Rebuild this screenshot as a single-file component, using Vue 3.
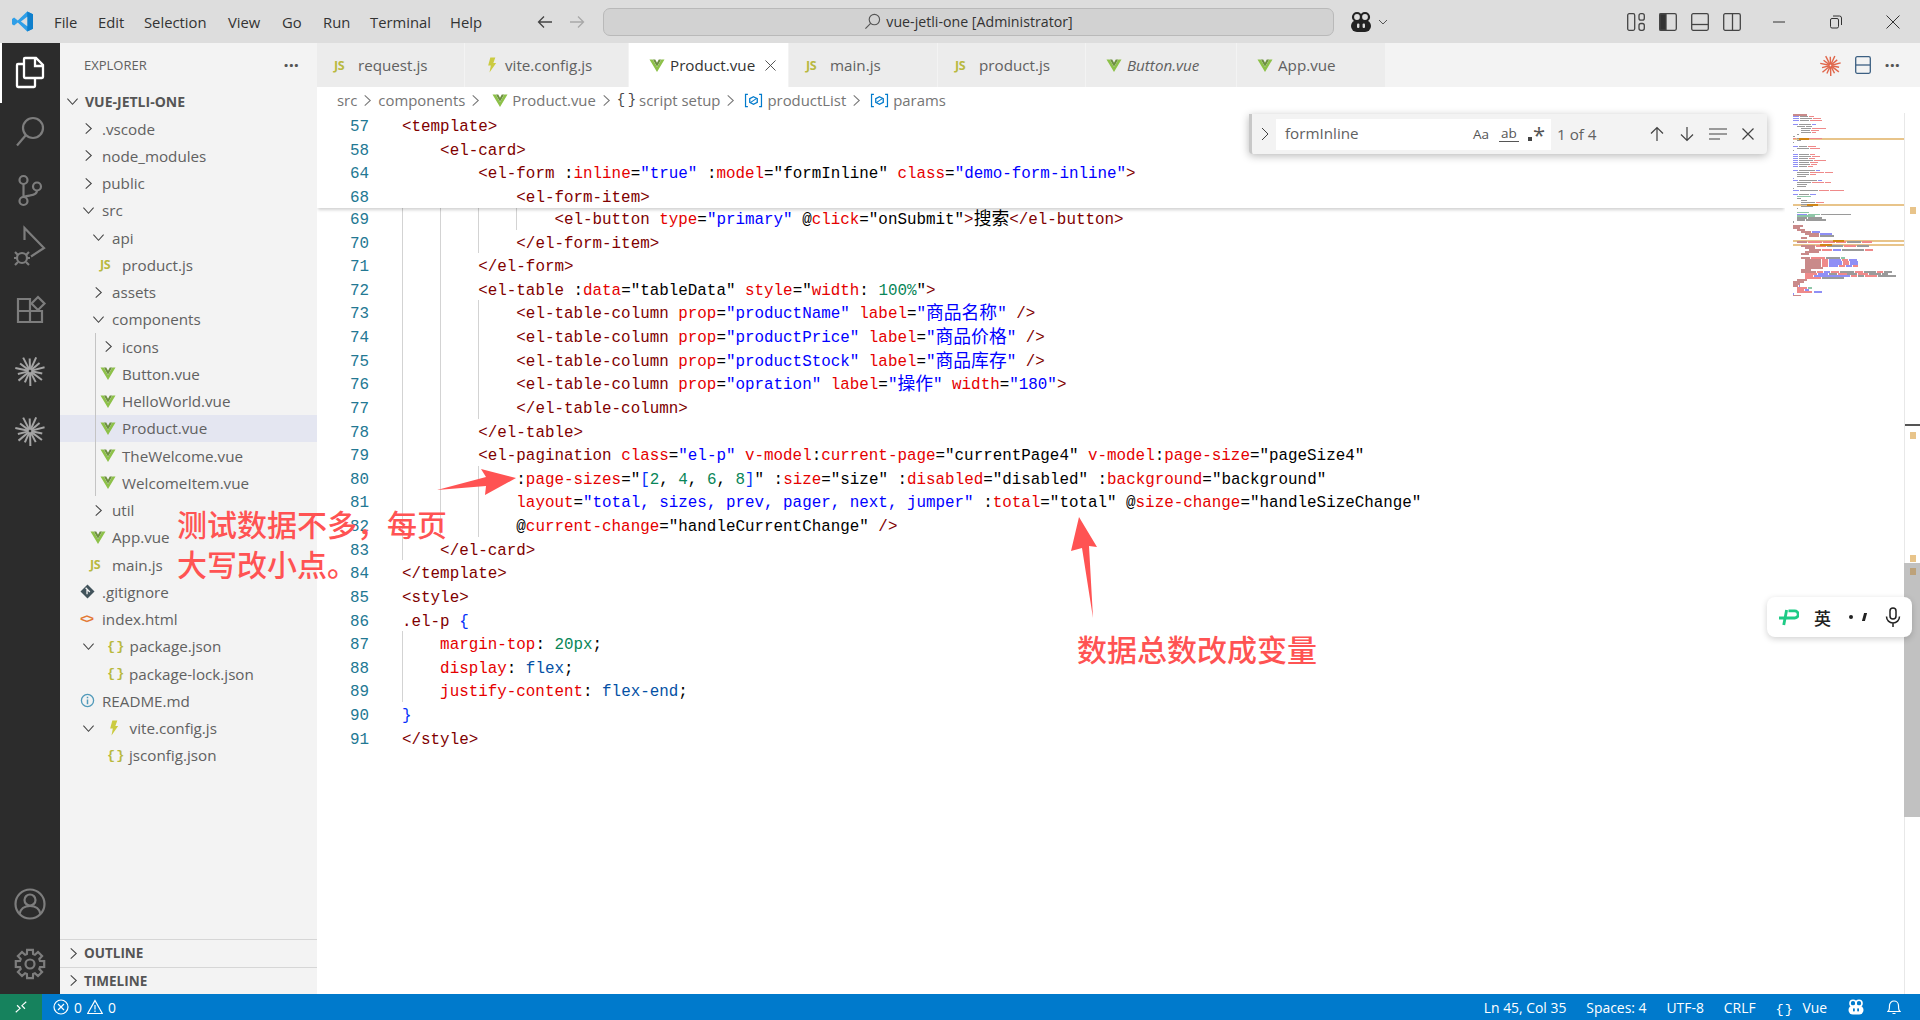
<script setup>
const menus = [
    { label: "File", width: 44 },
    { label: "Edit", width: 46 },
    { label: "Selection", width: 84 },
    { label: "View", width: 54 },
    { label: "Go", width: 41 },
    { label: "Run", width: 47 },
    { label: "Terminal", width: 80 },
    { label: "Help", width: 34 },
];

const tabs = [
    { name: "request.js", icon: "js", width: 148 },
    { name: "vite.config.js", icon: "vite", width: 164 },
    { name: "Product.vue", icon: "vue", width: 160, active: true },
    { name: "main.js", icon: "js", width: 149 },
    { name: "product.js", icon: "js", width: 148 },
    { name: "Button.vue", icon: "vue", width: 151, italic: true },
    { name: "App.vue", icon: "vue", width: 149 },
];

// left = where the chevron/icon slot begins, label follows the slots
const tree = [
    { name: ".vscode", left: 82, chev: "r" },
    { name: "node_modules", left: 82, chev: "r" },
    { name: "public", left: 82, chev: "r" },
    { name: "src", left: 82, chev: "d" },
    { name: "api", left: 92, chev: "d" },
    { name: "product.js", left: 100, icon: "js" },
    { name: "assets", left: 92, chev: "r" },
    { name: "components", left: 92, chev: "d" },
    { name: "icons", left: 102, chev: "r" },
    { name: "Button.vue", left: 100, icon: "vue" },
    { name: "HelloWorld.vue", left: 100, icon: "vue" },
    { name: "Product.vue", left: 100, icon: "vue", selected: true },
    { name: "TheWelcome.vue", left: 100, icon: "vue" },
    { name: "WelcomeItem.vue", left: 100, icon: "vue" },
    { name: "util", left: 92, chev: "r" },
    { name: "App.vue", left: 90, icon: "vue" },
    { name: "main.js", left: 90, icon: "js" },
    { name: ".gitignore", left: 80, icon: "git" },
    { name: "index.html", left: 80, icon: "html" },
    { name: "package.json", left: 82, chev: "d", icon: "json" },
    { name: "package-lock.json", left: 107, icon: "json" },
    { name: "README.md", left: 80, icon: "info" },
    { name: "vite.config.js", left: 82, chev: "d", icon: "vite" },
    { name: "jsconfig.json", left: 107, icon: "json" },
];

// §x switches colour: t tag, a attribute, s string, k plain, n number, b bracket, v css value
const parse = (src) =>
    src
        .split("§")
        .filter(Boolean)
        .flatMap((part) =>
            part
                .slice(1)
                .split(/([\u4e00-\u9fff]+)/)
                .filter(Boolean)
                .map((text) => ({
                    cls: part[0],
                    text,
                    cjk: /[\u4e00-\u9fff]/.test(text),
                })),
        );

const line = (num, depth, src) => ({ num, depth, tokens: parse(src) });

const stickyLines = [
    line(57, 0, "§t<template>"),
    line(58, 1, "§t<el-card>"),
    line(64, 2, '§t<el-form §k:§ainline§k=§s"true"§k :§amodel§k="formInline" §aclass§k=§s"demo-form-inline"§t>'),
    line(68, 3, "§t<el-form-item>"),
];

const codeLines = [
    line(69, 4, '§t<el-button §atype§k=§s"primary" §k@§aclick§k="onSubmit"§t>§k搜索§t</el-button>'),
    line(70, 3, "§t</el-form-item>"),
    line(71, 2, "§t</el-form>"),
    line(72, 2, '§t<el-table §k:§adata§k="tableData" §astyle§k="§awidth§k: §n100%§k"§t>'),
    line(73, 3, '§t<el-table-column §aprop§k=§s"productName" §alabel§k=§s"商品名称" §t/>'),
    line(74, 3, '§t<el-table-column §aprop§k=§s"productPrice" §alabel§k=§s"商品价格" §t/>'),
    line(75, 3, '§t<el-table-column §aprop§k=§s"productStock" §alabel§k=§s"商品库存" §t/>'),
    line(76, 3, '§t<el-table-column §aprop§k=§s"opration" §alabel§k=§s"操作" §awidth§k=§s"180"§t>'),
    line(77, 3, "§t</el-table-column>"),
    line(78, 2, "§t</el-table>"),
    line(79, 2, '§t<el-pagination §aclass§k=§s"el-p" §av-model§k:§acurrent-page§k="currentPage4" §av-model§k:§apage-size§k="pageSize4"'),
    line(80, 3, '§k:§apage-sizes§k="§b[§n2§k, §n4§k, §n6§k, §n8§b]§k" :§asize§k="size" :§adisabled§k="disabled" :§abackground§k="background"'),
    line(81, 3, '§alayout§k=§s"total, sizes, prev, pager, next, jumper" §k:§atotal§k="total" @§asize-change§k="handleSizeChange"'),
    line(82, 3, '§k@§acurrent-change§k="handleCurrentChange" §t/>'),
    line(83, 1, "§t</el-card>"),
    line(84, 0, "§t</template>"),
    line(85, 0, "§t<style>"),
    line(86, 0, "§t.el-p §b{"),
    line(87, 1, "§amargin-top§k: §n20px§k;"),
    line(88, 1, "§adisplay§k: §vflex§k;"),
    line(89, 1, "§ajustify-content§k: §vflex-end§k;"),
    line(90, 0, "§b}"),
    line(91, 0, "§t</style>"),
];

const burst = Array.from({ length: 14 }, (_, i) => {
    const a = (i * Math.PI) / 7 + 0.2;
    const r = i % 2 ? 15 : 12.5;
    return {
        x1: 30 + Math.cos(a) * 1.5,
        y1: 30 + Math.sin(a) * 1.5,
        x2: 30 + Math.cos(a) * r,
        y2: 30 + Math.sin(a) * r,
    };
});

const gearPath = (() => {
    const pts = [];
    for (let i = 0; i < 8; i++) {
        const a = (i * Math.PI) / 4;
        [[-0.3, 10.5], [-0.2, 14.5], [0.2, 14.5], [0.3, 10.5]].forEach(([d, r]) => {
            pts.push(`${(30 + Math.cos(a + d) * r).toFixed(1)} ${(30 + Math.sin(a + d) * r).toFixed(1)}`);
        });
    }
    return "M" + pts.join("L") + "Z";
})();

const minimapSpec = [
    "0t14", "0b6 7k8 16r5", "0b6 7k12 20r8", "0b6 7k9 17r12", "",
    "0b5 6k12 19b4", "4k8 13k6", "8k10 19r14", "8k9 18r8", "8k10 19r4", "4k2", "0k2",
    "0r3 4k10 15r14", "4k4", "0k1", "", "0b5 6k8 15r8", "4k12 17r10", "0k1", "",
    "0b5 6k10 17r5", "0b5 6k12 19r8", "0b5 6k9 16r6", "0b5 6k14 21r12", "0b5 6k10 17r8", "0b5 6k11 18r6", "0b5 6k8 15r5", "",
    "0b5 6k16 23b4", "4k12 17r14 32r8", "4k12 17r6", "4k9", "0b1", "0b5 6k18 25b4", "4k14 19r12 32r6", "4k10", "4k9", "0k1",
    "0b6 7k18 26r10 37r14", "", "0b5 6k10 17b6", "4g14", "4k4", "8k6", "8k14 23r8",
    "8k16", "8k12", "4k1", "", "4g12", "4b10 15g12 28k30", "4g18", "4k10 15k14", "4k8 13k20", "0k1", "",
    "0t10", "0t7", "4t8", "8t10 19b8", "12t14 27b12", "16t10 27k14", "8t6", "",
    "4t10 15r14 30r12 43r10 54k14 69r10", "", "8t14 23r10 34k16 51r12 64k12", "12t10", "16t12 29r10 40b8 49k22 72r8", "12t14", "8t8", "",
    "8t9 18r14 33k14 48g4", "12t16 29r6 36b12 49r6 56b8", "12t16 29r6 36b13 50r6 57b8", "12t16 29r6 36b13 50r6 57b8", "12t16 29r6 36b9 46r6 53b6 60r5", "12t18", "8t10",
    "8t15 24r6 31b6 38r8 47k14 62r8 71k12 84r6 91k8", "12r12 25b10 36k8 45r10 54k10 65r10 76k12 89k6", "12r8 21b36 58r6 65k6 72r12 85k18", "12r16 29k22", "4t10", "0t11", "0t7",
    "0t5 6b1", "4r10 15g4", "4r7 12b4", "4r15 21b8", "0b1", "0t8",
];

const mmColors = { t: "#c98a8a", r: "#ef8a8a", b: "#8f8ff5", k: "#9a9a9a", g: "#8fc7a8" };

const minimap = minimapSpec.flatMap((spec, i) =>
    spec
        .split(" ")
        .filter(Boolean)
        .map((seg) => {
            const m = seg.match(/(\d+)([a-z])(\d+)/);
            return { x: +m[1], y: i * 1.99, w: +m[3], fill: mmColors[m[2]] };
        }),
);

const mmHits = [
    { y: 24, x: 6, w: 10 },
    { y: 90, x: 14, w: 11 },
    { y: 126, x: 40, w: 11 },
    { y: 130, x: 27, w: 12 },
];
</script>

<template>
    <div class="workbench">
        <svg class="defs" aria-hidden="true">
            <symbol id="vue-logo" viewBox="0 0 16 16">
                <path d="M0 1.5h3.4L8 9.6l4.6-8.1H16L8 15z" fill="#8dc149" />
                <path d="M3.6 1.5h2.5L8 5l1.9-3.5h2.5L8 9.2z" fill="#6c8f3e" />
            </symbol>
            <symbol id="vite-logo" viewBox="0 0 12 20">
                <path d="M4 1h6L7.6 7.5h3.4L3 19l1.6-8.5H1.4z" fill="#cbcb41" />
            </symbol>
            <symbol id="copilot" viewBox="0 0 24 24">
                <circle cx="8" cy="7" r="4" fill="none" stroke="currentColor" stroke-width="2.2" />
                <circle cx="16" cy="7" r="4" fill="none" stroke="currentColor" stroke-width="2.2" />
                <rect x="2" y="10" width="20" height="12" rx="6" fill="currentColor" />
                <rect x="8" y="13.5" width="2.4" height="4.5" rx="1" fill="var(--snout, #fff)" />
                <rect x="13.6" y="13.5" width="2.4" height="4.5" rx="1" fill="var(--snout, #fff)" />
            </symbol>
            <symbol id="ref-icon" viewBox="0 0 20 16">
                <path d="M4 1.5H1.5v13H4M16 1.5h2.5v13H16" fill="none" stroke="#007acc" stroke-width="1.3" />
                <path d="M10 4l4 2v4l-4 2-4-2V6z" fill="none" stroke="#007acc" stroke-width="1.4" />
                <path d="M7 10l6-4" stroke="#007acc" stroke-width="1.2" />
            </symbol>
            <symbol id="chev-right" viewBox="0 0 14 14">
                <path d="M4 1.500l6 5.500-6 5.500" fill="none" stroke="currentColor" stroke-width="1.100" />
            </symbol>
        </svg>

        <header class="titlebar">
            <div class="tb-left">
                <svg class="logo" viewBox="0 0 20 20">
                    <path d="M14.5 0.5 20 3v14l-5.500 2.500L5.500 11l-3.500 2.700L0 12.500v-5L2 6.300 5.500 9z" fill="#2f9fe8" />
                    <path d="M14.500 0.500 20 3v14l-5.500 2.500z" fill="#0f7fcc" />
                    <path d="M14.500 5.500 8.500 10l6 4.500z" fill="#dddddd" />
                </svg>
                <nav class="menu">
                    <span v-for="item in menus" :key="item.label" :style="{ width: item.width + 'px' }">{{ item.label }}</span>
                </nav>
                <svg class="nav-arrow first" viewBox="0 0 16 14">
                    <path d="M15 7H1.500M7 1.500 1.500 7 7 12.500" />
                </svg>
                <svg class="nav-arrow faded" viewBox="0 0 16 14">
                    <path d="M1 7h13.500M9 1.500 14.500 7 9 12.500" />
                </svg>
            </div>

            <div class="command-center">
                <svg viewBox="0 0 18 18">
                    <circle cx="11" cy="7" r="5.500" />
                    <path d="M7 11 1.500 16.500" />
                </svg>
                <span>vue-jetli-one [Administrator]</span>
            </div>

            <svg class="tb-copilot"><use href="#copilot" /></svg>
            <svg class="tb-chevron" viewBox="0 0 10 6"><path d="M1 1l4 4 4-4" /></svg>

            <div class="layout-icons">
                <svg viewBox="0 0 18 18">
                    <rect x="0.700" y="0.700" width="7" height="16.600" rx="1.500" />
                    <rect x="12" y="0.700" width="5.300" height="6.500" rx="2" />
                    <rect x="12" y="10.500" width="5.300" height="6.800" rx="2" />
                </svg>
                <svg viewBox="0 0 18 18">
                    <rect x="0.700" y="0.700" width="16.600" height="16.600" rx="1.500" />
                    <path d="M1 1h6v16H1z" fill="#333" />
                </svg>
                <svg viewBox="0 0 18 18">
                    <rect x="0.700" y="0.700" width="16.600" height="16.600" rx="1.500" />
                    <path d="M1 11.500h16" />
                </svg>
                <svg viewBox="0 0 18 18">
                    <rect x="0.700" y="0.700" width="16.600" height="16.600" rx="1.500" />
                    <path d="M9.500 1v16" />
                </svg>
            </div>

            <div class="window-buttons">
                <svg viewBox="0 0 14 14"><path d="M1 7h12" /></svg>
                <svg viewBox="0 0 14 14">
                    <rect x="1.500" y="3.500" width="8" height="9.500" rx="1.500" />
                    <path d="M4 1h6.500a2 2 0 0 1 2 2v7" />
                </svg>
                <svg viewBox="0 0 14 14"><path d="M0.500 0.500l13 13M13.500 0.500l-13 13" /></svg>
            </div>
        </header>

        <div class="body">
            <aside class="activity">
                <div class="act-item active">
                    <svg viewBox="0 0 60 60">
                        <path d="M25 15h11l7 7v12a1 1 0 0 1-1 1H25a1 1 0 0 1-1-1V16a1 1 0 0 1 1-1zM35 15v8h8" />
                        <path d="M24 21h-6a1 1 0 0 0-1 1v21a1 1 0 0 0 1 1h16a1 1 0 0 0 1-1v-9" />
                    </svg>
                </div>
                <div class="act-item">
                    <svg viewBox="0 0 60 60">
                        <circle cx="33" cy="25" r="10" />
                        <path d="M26 32 17 42.500" />
                    </svg>
                </div>
                <div class="act-item">
                    <svg viewBox="0 0 60 60">
                        <circle cx="23.500" cy="18" r="4" />
                        <circle cx="37" cy="24.500" r="4" />
                        <circle cx="23.500" cy="39" r="4" />
                        <path d="M23.500 22v13M37 28.500c0 4-4 4.500-7 5s-6.500 1-6.500 2" />
                    </svg>
                </div>
                <div class="act-item">
                    <svg viewBox="0 0 60 60">
                        <path d="M24.500 18V6L44 26l-13 8.500" />
                        <circle cx="22" cy="36" r="5" />
                        <path d="M15 30l3 3M29 30l-3 3M14 36h3M27 36h3M15 43l3-3M29 43l-3-3" />
                    </svg>
                </div>
                <div class="act-item">
                    <svg viewBox="0 0 60 60">
                        <path d="M18 18h12v23H18zM18 30h24v11H30V30" />
                        <path d="M38 16l6.500 6.500L38 29l-6.500-6.500z" />
                    </svg>
                </div>
                <div class="act-item snow" v-for="n in 2" :key="n">
                    <svg viewBox="0 0 60 60">
                        <line v-for="(ray, i) in burst" :key="i" v-bind="ray" />
                    </svg>
                </div>
                <div class="act-item push">
                    <svg viewBox="0 0 60 60">
                        <circle cx="30" cy="30" r="14.500" />
                        <circle cx="30" cy="26" r="5.500" />
                        <path d="M19.500 40c1-5 5-8 10.500-8s9.500 3 10.500 8" />
                    </svg>
                </div>
                <div class="act-item">
                    <svg viewBox="0 0 60 60">
                        <path :d="gearPath" />
                        <circle cx="30" cy="30" r="4.500" />
                    </svg>
                </div>
            </aside>

            <aside class="sidebar">
                <div class="side-head">
                    <span>EXPLORER</span>
                    <span class="dots">···</span>
                </div>
                <div class="root-row">
                    <svg class="chev" viewBox="0 0 14 14"><path d="M1.500 4l5.500 6 5.500-6" /></svg>
                    <span>VUE-JETLI-ONE</span>
                </div>
                <div class="tree">
                    <div class="tree-guide"></div>
                    <div
                        v-for="item in tree"
                        :key="item.name + item.left"
                        class="row"
                        :class="{ selected: item.selected }"
                        :style="{ paddingLeft: item.left - 60 + 'px' }"
                    >
                        <span v-if="item.chev" class="slot-chev">
                            <svg v-if="item.chev === 'r'" class="chev" viewBox="0 0 14 14">
                                <path d="M4 1.500l6 5.500-6 5.500" />
                            </svg>
                            <svg v-else class="chev" viewBox="0 0 14 14">
                                <path d="M1.500 4l5.500 6 5.500-6" />
                            </svg>
                        </span>
                        <span v-if="item.icon" class="slot-icon">
                            <span v-if="item.icon === 'js'" class="ic-js">JS</span>
                            <svg v-else-if="item.icon === 'vue'" class="ic-vue"><use href="#vue-logo" /></svg>
                            <svg v-else-if="item.icon === 'vite'" class="ic-vite"><use href="#vite-logo" /></svg>
                            <span v-else-if="item.icon === 'json'" class="ic-json">{ }</span>
                            <span v-else-if="item.icon === 'html'" class="ic-html">&lt;&gt;</span>
                            <svg v-else-if="item.icon === 'git'" class="ic-glyph" viewBox="0 0 16 16">
                                <path d="M8 0.500 15.500 8 8 15.500 0.500 8z" fill="#41535b" />
                                <path d="M6 4l4.500 4.500M7.500 6v5" stroke="#f3f3f3" stroke-width="1.400" />
                            </svg>
                            <svg v-else class="ic-glyph" viewBox="0 0 16 16">
                                <circle cx="8" cy="8" r="6.500" fill="none" stroke="#519aba" stroke-width="1.400" />
                                <path d="M8 7v5M8 4v1.500" stroke="#519aba" stroke-width="1.600" />
                            </svg>
                        </span>
                        <span class="row-name">{{ item.name }}</span>
                    </div>
                </div>
                <div class="panes">
                    <div class="pane">
                        <svg class="chev" viewBox="0 0 14 14"><path d="M4 1.500l6 5.500-6 5.500" /></svg>
                        OUTLINE
                    </div>
                    <div class="pane">
                        <svg class="chev" viewBox="0 0 14 14"><path d="M4 1.500l6 5.500-6 5.500" /></svg>
                        TIMELINE
                    </div>
                </div>
            </aside>

            <main class="editor">
                <div class="tabs">
                    <div
                        v-for="tab in tabs"
                        :key="tab.name"
                        class="tab"
                        :class="{ active: tab.active, italic: tab.italic }"
                        :style="{ width: tab.width + 'px' }"
                    >
                        <span v-if="tab.icon === 'js'" class="ic-js">JS</span>
                        <svg v-else-if="tab.icon === 'vue'" class="ic-vue"><use href="#vue-logo" /></svg>
                        <svg v-else class="ic-vite"><use href="#vite-logo" /></svg>
                        <span>{{ tab.name }}</span>
                        <svg v-if="tab.active" class="tab-close" viewBox="0 0 12 12">
                            <path d="M0.500 0.500l11 11M11.500 0.500l-11 11" />
                        </svg>
                    </div>
                    <div class="tab-actions">
                        <svg class="tab-burst" viewBox="15 15 30 30">
                            <line v-for="(ray, i) in burst" :key="i" v-bind="ray" />
                        </svg>
                        <svg class="tab-split" viewBox="0 0 16 18">
                            <rect x="0.700" y="0.700" width="14.600" height="16.600" rx="1.500" />
                            <path d="M1 9h14" />
                        </svg>
                        <span class="dots">···</span>
                    </div>
                </div>

                <div class="crumbs">
                    <span>src</span>
                    <svg class="sep"><use href="#chev-right" /></svg>
                    <span>components</span>
                    <svg class="sep"><use href="#chev-right" /></svg>
                    <svg class="ic-vue"><use href="#vue-logo" /></svg>
                    <span>Product.vue</span>
                    <svg class="sep"><use href="#chev-right" /></svg>
                    <b>{ }</b>
                    <span>script setup</span>
                    <svg class="sep"><use href="#chev-right" /></svg>
                    <svg class="ic-ref"><use href="#ref-icon" /></svg>
                    <span>productList</span>
                    <svg class="sep"><use href="#chev-right" /></svg>
                    <svg class="ic-ref"><use href="#ref-icon" /></svg>
                    <span>params</span>
                </div>

                <div class="content">
                    <div class="code">
                        <div class="sticky">
                            <div v-for="l in stickyLines" :key="l.num" class="line">
                                <span class="num">{{ l.num }}</span>
                                <span class="src">
                                    <span v-for="d in l.depth" :key="d" class="ind plain"></span>
                                    <span
                                        v-for="(tok, i) in l.tokens"
                                        :key="i"
                                        :class="[tok.cls, { cjk: tok.cjk }]"
                                    >{{ tok.text }}</span>
                                </span>
                            </div>
                        </div>
                        <div class="scrolled">
                            <div v-for="l in codeLines" :key="l.num" class="line">
                                <span class="num">{{ l.num }}</span>
                                <span class="src">
                                    <span v-for="d in l.depth" :key="d" class="ind"></span>
                                    <span
                                        v-for="(tok, i) in l.tokens"
                                        :key="i"
                                        :class="[tok.cls, { cjk: tok.cjk }]"
                                    >{{ tok.text }}</span>
                                </span>
                            </div>
                        </div>
                    </div>

                    <div class="minimap">
                        <svg width="111" height="182" shape-rendering="crispEdges">
                            <rect
                                v-for="(hit, i) in mmHits"
                                :key="'h' + i"
                                x="0"
                                :y="hit.y"
                                width="111"
                                height="2"
                                fill="#e8c48a"
                            />
                            <rect
                                v-for="(seg, i) in minimap"
                                :key="i"
                                :x="seg.x"
                                :y="seg.y"
                                :width="seg.w"
                                height="1.500"
                                :fill="seg.fill"
                            />
                            <rect
                                v-for="(hit, i) in mmHits"
                                :key="'d' + i"
                                :x="hit.x"
                                :y="hit.y"
                                :width="hit.w"
                                height="2"
                                fill="#d18616"
                            />
                        </svg>
                    </div>

                    <div class="scrollbar">
                        <div class="slider"></div>
                        <i class="tick"></i>
                        <i class="mark m1"></i>
                        <i class="mark m2"></i>
                        <i class="mark m3"></i>
                        <i class="mark m4"></i>
                    </div>

                    <div class="find">
                        <svg class="find-chev" viewBox="0 0 8 14"><path d="M1 1l6 6-6 6" /></svg>
                        <div class="find-input">
                            <span class="find-text">formInline</span>
                            <span class="opt">Aa</span>
                            <span class="opt under">ab</span>
                            <span class="opt regex"><i></i>*</span>
                        </div>
                        <span class="find-count">1 of 4</span>
                        <svg class="find-btn" viewBox="0 0 14 16"><path d="M7 15V1.500M1 7.500l6-6 6 6" /></svg>
                        <svg class="find-btn" viewBox="0 0 14 16"><path d="M7 1v13.500M1 8.500l6 6 6-6" /></svg>
                        <svg class="find-btn lines" viewBox="0 0 18 14"><path d="M0 2h18M0 7h18M0 12h11" /></svg>
                        <svg class="find-btn small" viewBox="0 0 12 12"><path d="M0.500 0.500l11 11M11.500 0.500l-11 11" /></svg>
                    </div>
                </div>
            </main>
        </div>

        <footer class="status">
            <div class="remote">
                <svg viewBox="0 0 16 16"><path d="M2 14l5-4.500L3.500 6M14 2 9 6.500l3.500 3.500" /></svg>
            </div>
            <svg class="st-icon first" viewBox="0 0 16 16">
                <circle cx="8" cy="8" r="7" />
                <path d="M5 5l6 6M11 5l-6 6" />
            </svg>
            <span class="st-num">0</span>
            <svg class="st-icon warn" viewBox="0 0 16 16"><path d="M8 1.500 15.300 14.500H0.700zM8 6v4.500M8 11.500v1.500" /></svg>
            <span class="st-num">0</span>
            <div class="st-right">
                <span>Ln 45, Col 35</span>
                <span>Spaces: 4</span>
                <span>UTF-8</span>
                <span>CRLF</span>
                <span class="st-lang"><b>{ }</b>Vue</span>
                <svg class="st-copilot"><use href="#copilot" /></svg>
                <svg class="st-bell" viewBox="0 0 14 16">
                    <path d="M1 12.500c1.500-1 1.500-3 1.500-6a4.500 4.500 0 0 1 9 0c0 3 0 5 1.500 6zM5.500 14.500h3" />
                </svg>
            </div>
        </footer>

        <!-- annotations pasted on the screenshot -->
        <div class="note note-a">测试数据不多，每页<br />大写改小点。</div>
        <div class="note note-b">数据总数改成变量</div>
        <svg class="arrows" viewBox="0 0 1920 1020">
            <path d="M437 490 486 477 481 469 516 478 485 495 486 486Z" />
            <path d="M1079 517 1097 547 1089 546 1093 618 1082 548 1071 551Z" />
        </svg>

        <div class="ime">
            <svg class="ime-logo" viewBox="0 0 22 20">
                <path d="M11 3h6.500a3.500 3.500 0 0 1 0 7.500H9M9 2 6 18M1 10.500h9" />
            </svg>
            <span class="ime-lang">英</span>
            <span class="ime-dot"></span>
            <span class="ime-tick"></span>
            <svg class="ime-mic" viewBox="0 0 16 20">
                <rect x="5" y="1" width="6" height="11" rx="3" />
                <path d="M1.500 9.500a6.500 6.500 0 0 0 13 0M8 16v4" />
            </svg>
        </div>
    </div>
</template>

<style>
html,
body {
    margin: 0;
    overflow: hidden;
}
</style>

<style scoped>
.workbench {
    position: relative;
    width: 1920px;
    height: 1020px;
    display: flex;
    flex-direction: column;
    overflow: hidden;
    font-family: "Open Sans", "Noto Sans CJK SC", sans-serif;
    color: #616161;
    background: #fff;
}

.defs {
    position: absolute;
    width: 0;
    height: 0;
}

svg {
    display: block;
    flex: none;
}

/* title bar */
.titlebar {
    height: 43px;
    flex: none;
    display: flex;
    align-items: center;
    background: #dddddd;
    color: #333;
    font-size: 14.8px;
}

.tb-left {
    width: 603px;
    display: flex;
    align-items: center;
}

.logo {
    width: 21px;
    height: 21px;
    margin-left: 12px;
}

.menu {
    display: flex;
    margin-left: 21px;
}

.nav-arrow {
    width: 16px;
    height: 14px;
    fill: none;
    stroke: #444;
    stroke-width: 1.3;
}

.nav-arrow.first {
    margin-left: 53px;
}

.nav-arrow.faded {
    margin-left: 16px;
    stroke: #a8a8a8;
}

.command-center {
    width: 731px;
    height: 28px;
    box-sizing: border-box;
    display: flex;
    align-items: center;
    justify-content: center;
    gap: 5px;
    background: #d2d2d2;
    border: 1px solid #b9b9b9;
    border-radius: 7px;
    font-size: 14.2px;
}

.command-center svg {
    width: 17px;
    height: 17px;
    fill: none;
    stroke: #555;
    stroke-width: 1.2;
}

.tb-copilot {
    width: 24px;
    height: 24px;
    margin-left: 15px;
    color: #222;
    --snout: #dddddd;
}

.tb-chevron {
    width: 10px;
    height: 6px;
    margin-left: 5px;
    fill: none;
    stroke: #555;
}

.layout-icons {
    display: flex;
    gap: 14px;
    margin-left: 239px;
}

.layout-icons svg {
    width: 18px;
    height: 18px;
    fill: none;
    stroke: #444;
    stroke-width: 1.3;
}

.window-buttons {
    display: flex;
    gap: 43px;
    margin-left: 31px;
}

.window-buttons svg {
    width: 14px;
    height: 14px;
    fill: none;
    stroke: #333;
    stroke-width: 1;
}

/* main area */
.body {
    flex: 1;
    min-height: 0;
    display: flex;
}

.activity {
    width: 60px;
    flex: none;
    display: flex;
    flex-direction: column;
    background: #2c2c2c;
}

.act-item {
    height: 59.6px;
    flex: none;
}

.act-item.push {
    margin-top: auto;
    height: 60px;
}

.act-item:last-child {
    height: 60px;
}

.act-item svg {
    width: 60px;
    height: 60px;
    fill: none;
    stroke: #7d7d7d;
    stroke-width: 2.2;
}

.act-item.active {
    box-shadow: inset 2px 0 0 #fff;
}

.act-item.active svg {
    stroke: #fff;
    stroke-width: 2.3;
}

.act-item.snow svg {
    stroke: #a4a4a4;
    stroke-width: 2;
}

.sidebar {
    width: 257px;
    flex: none;
    display: flex;
    flex-direction: column;
    background: #f3f3f3;
    font-size: 15.2px;
}

.side-head {
    height: 44px;
    flex: none;
    display: flex;
    align-items: center;
    justify-content: space-between;
    box-sizing: border-box;
    padding: 0 18px 0 24px;
    font-size: 13px;
}

.dots {
    font-size: 18px;
    font-weight: 700;
    color: #555;
    line-height: 1;
}

.root-row {
    height: 28px;
    flex: none;
    display: flex;
    align-items: center;
    gap: 6px;
    padding-left: 6px;
    font-size: 14px;
    font-weight: 700;
    color: #555;
}

.chev {
    width: 13px;
    height: 13px;
    fill: none;
    stroke: #424242;
    stroke-width: 1.100;
}

.tree {
    position: relative;
    flex: 1;
}

.tree-guide {
    position: absolute;
    left: 35px;
    top: 218px;
    height: 163px;
    width: 1px;
    background: #c4c4c4;
    z-index: 1;
}

.row {
    height: 27.25px;
    display: flex;
    align-items: center;
    box-sizing: border-box;
}

.row.selected {
    background: #e4e6f1;
}

.row-name {
    white-space: nowrap;
}

.slot-chev {
    width: 20px;
    flex: none;
}

.slot-icon {
    width: 22px;
    flex: none;
    display: flex;
    align-items: center;
}

.slot-chev + .slot-icon {
    padding-left: 5px;
    box-sizing: content-box;
    width: 22.6px;
}

.ic-js {
    width: 16px;
    font: 700 12.5px "Open Sans", sans-serif;
    letter-spacing: -0.5px;
    color: #b9b93f;
}

.ic-vue {
    width: 16px;
    height: 15px;
}

.ic-vite {
    width: 10px;
    height: 18px;
    margin-left: 2px;
}

.ic-json {
    font: 700 13.5px "Liberation Mono", monospace;
    letter-spacing: -3.5px;
    color: #b9b93f;
}

.ic-html {
    font: 700 13px "Liberation Mono", monospace;
    letter-spacing: -1.500px;
    color: #e37933;
}

.ic-glyph {
    width: 15px;
    height: 15px;
}

.panes {
    flex: none;
}

.pane {
    height: 26.500px;
    display: flex;
    align-items: center;
    gap: 4px;
    padding-left: 8px;
    border-top: 1px solid #d6d6d6;
    font-size: 13.5px;
    font-weight: 700;
    color: #555;
}

.pane .chev {
    margin-left: -1px;
}

/* editor */
.editor {
    flex: 1;
    min-width: 0;
    display: flex;
    flex-direction: column;
}

.tabs {
    height: 44px;
    flex: none;
    display: flex;
    background: #f3f3f3;
}

.tab {
    flex: none;
    display: flex;
    align-items: center;
    gap: 8px;
    box-sizing: border-box;
    padding-left: 17px;
    background: #ececec;
    border-right: 1px solid #f3f3f3;
    font-size: 15.2px;
}

.tab .ic-vue {
    margin-left: 3px;
    margin-right: -3px;
}

.tab .ic-vite {
    margin-left: 5px;
}

.tab.active {
    padding-left: 17px;
    background: #fff;
    color: #333;
}

.tab.italic {
    font-style: italic;
}

.tab-close {
    width: 11px;
    height: 11px;
    margin-left: auto;
    margin-right: 12px;
    fill: none;
    stroke: #444;
    stroke-width: 1;
}

.tab-actions {
    flex: 1;
    display: flex;
    align-items: center;
    justify-content: flex-end;
    padding-right: 20px;
    gap: 14px;
}

.tab-burst {
    width: 21px;
    height: 21px;
    stroke: #e0664a;
    stroke-width: 2;
}

.tab-split {
    width: 16px;
    height: 18px;
    fill: none;
    stroke: #3b5f82;
    stroke-width: 1.3;
}

.crumbs {
    height: 26px;
    flex: none;
    display: flex;
    align-items: center;
    padding-left: 20px;
    font-size: 14.9px;
    color: #757575;
}

.sep {
    width: 13px;
    height: 13px;
    margin: 0 4px;
    color: #777;
}

.crumbs b {
    font: 400 14px "Liberation Mono", monospace;
    letter-spacing: -3px;
    color: #444;
    margin: 0 6px 0 0;
}

.crumbs .ic-vue {
    margin: 0 4px 0 6px;
}

.ic-ref {
    width: 19px;
    height: 15px;
    margin: 0 4px 0 3px;
}

.content {
    position: relative;
    flex: 1;
    min-height: 0;
    display: flex;
}

.code {
    width: 1468px;
    flex: none;
    overflow: hidden;
    font: 15.880px "Liberation Mono", "Noto Sans CJK SC", monospace;
}

.sticky {
    position: relative;
    z-index: 2;
    background: #fff;
    box-shadow: 0 3px 3px -1px rgba(0, 0, 0, 0.18);
}

.scrolled {
    margin-top: -1.600px;
}

.line {
    height: 23.630px;
    line-height: 29px;
    display: flex;
    white-space: pre;
}

.num {
    width: 52px;
    flex: none;
    text-align: right;
    color: #237893;
}

.src {
    display: flex;
    margin-left: 33px;
}

.ind {
    width: 38.120px;
    flex: none;
    box-sizing: border-box;
    border-left: 1px solid #d3d3d3;
}

.ind.plain {
    border-left-color: transparent;
}

.t {
    color: #800000;
}

.a {
    color: #e50000;
}

.s {
    color: #0000ff;
}

.k {
    color: #000;
}

.n {
    color: #098658;
}

.b {
    color: #0431fa;
}

.v {
    color: #0451a5;
}

.cjk {
    font-size: 17.800px;
}

.minimap {
    width: 119px;
    flex: none;
    box-sizing: border-box;
    padding: 1px 0 0 8px;
}

.scrollbar {
    position: relative;
    width: 16px;
    flex: none;
    box-sizing: border-box;
    border-left: 1px solid #e8e8e8;
}

.slider {
    position: absolute;
    left: -1px;
    right: 0;
    top: 450px;
    height: 254px;
    background: #c1c1c1;
}

.tick {
    position: absolute;
    left: 0;
    right: 0;
    top: 311px;
    height: 2px;
    background: #555;
}

.mark {
    position: absolute;
    left: 5px;
    width: 6px;
    height: 7px;
    background: #e8c48a;
}

.m1 {
    top: 94px;
}

.m2 {
    top: 319px;
}

.m3 {
    top: 442px;
}

.m4 {
    top: 455px;
    background: #bda27a;
}

/* find widget */
.find {
    position: absolute;
    z-index: 3;
    left: 932px;
    top: 1px;
    width: 518px;
    height: 40px;
    box-sizing: border-box;
    display: flex;
    align-items: center;
    background: #f3f3f3;
    border-left: 3px solid #c8c8c8;
    border-radius: 0 0 4px 4px;
    box-shadow: 0 2px 8px rgba(0, 0, 0, 0.28);
    font-size: 15.200px;
}

.find-chev {
    width: 8px;
    height: 14px;
    margin-left: 9px;
    fill: none;
    stroke: #424242;
}

.find-input {
    width: 275px;
    height: 31px;
    flex: none;
    margin-left: 7px;
    box-sizing: border-box;
    padding: 0 6px 0 9px;
    display: flex;
    align-items: center;
    background: #fff;
}

.find-text {
    flex: 1;
    margin-top: -2px;
}

.opt {
    width: 26px;
    text-align: center;
    font-size: 13.500px;
    color: #555;
}

.opt.under {
    border-bottom: 1px solid #555;
    line-height: 15px;
    width: 20px;
    margin: 0 8px 0 5px;
}

.opt.regex {
    width: 18px;
    font-size: 22px;
    line-height: 22px;
    height: 22px;
    display: flex;
    align-items: flex-start;
}

.opt.regex i {
    width: 4px;
    height: 4px;
    margin: 14px 1px 0 1px;
    background: #444;
}

.find-count {
    margin-left: 6px;
    width: 93px;
    flex: none;
}

.find-btn {
    width: 14px;
    height: 16px;
    margin-right: 16px;
    fill: none;
    stroke: #424242;
    stroke-width: 1.200;
}

.find-btn.lines {
    width: 18px;
    height: 14px;
    margin-left: -1px;
    margin-right: 15px;
}

.find-btn.small {
    width: 12px;
    height: 12px;
    margin-right: 0;
}

/* status bar */
.status {
    height: 26px;
    flex: none;
    display: flex;
    align-items: center;
    background: #007acc;
    color: #fff;
    font-size: 13.900px;
}

.remote {
    width: 42px;
    height: 100%;
    display: flex;
    align-items: center;
    justify-content: center;
    background: #16825d;
}

.remote svg {
    width: 14px;
    height: 14px;
    fill: none;
    stroke: #fff;
    stroke-width: 1.300;
}

.st-icon {
    width: 16px;
    height: 16px;
    fill: none;
    stroke: #fff;
    stroke-width: 1.200;
}

.st-icon.first {
    margin-left: 11px;
}

.st-icon.warn {
    margin-left: 5px;
}

.st-num {
    margin-left: 5px;
}

.st-right {
    margin-left: auto;
    display: flex;
    align-items: center;
    gap: 20px;
    padding-right: 19px;
}

.st-lang b {
    font: 400 13.500px "Liberation Mono", monospace;
    letter-spacing: -3.5px;
    margin-right: 13px;
}

.st-copilot {
    width: 18px;
    height: 18px;
    color: #fff;
    --snout: #007acc;
}

.st-bell {
    width: 14px;
    height: 16px;
    margin-left: 2px;
    fill: none;
    stroke: #fff;
    stroke-width: 1.200;
}

/* annotations */
.note {
    position: absolute;
    z-index: 5;
    font: 500 30px/40px "Noto Sans CJK SC", sans-serif;
    color: #ff5353;
    white-space: nowrap;
}

.note-a {
    left: 177px;
    top: 503px;
}

.note-b {
    left: 1077px;
    top: 628px;
}

.arrows {
    position: absolute;
    z-index: 5;
    left: 0;
    top: 0;
    width: 1920px;
    height: 1020px;
    fill: #ff5353;
    pointer-events: none;
}

.ime {
    position: absolute;
    z-index: 6;
    left: 1767px;
    top: 597px;
    width: 145px;
    height: 40px;
    display: flex;
    align-items: center;
    background: #fff;
    border-radius: 8px;
    box-shadow: 0 2px 6px rgba(0, 0, 0, 0.18);
}

.ime-logo {
    width: 21px;
    height: 19px;
    margin-left: 11px;
    fill: none;
    stroke: #1ecb86;
    stroke-width: 3;
}

.ime-lang {
    margin-left: 15px;
    font: 500 17px "Noto Sans CJK SC", sans-serif;
    color: #222;
}

.ime-dot {
    width: 4px;
    height: 4px;
    margin-left: 18px;
    border-radius: 50%;
    background: #222;
}

.ime-tick {
    width: 3px;
    height: 8px;
    margin-left: 10px;
    background: #222;
    transform: skewX(-15deg);
}

.ime-mic {
    width: 16px;
    height: 20px;
    margin-left: 19px;
    fill: none;
    stroke: #222;
    stroke-width: 1.500;
}
</style>
